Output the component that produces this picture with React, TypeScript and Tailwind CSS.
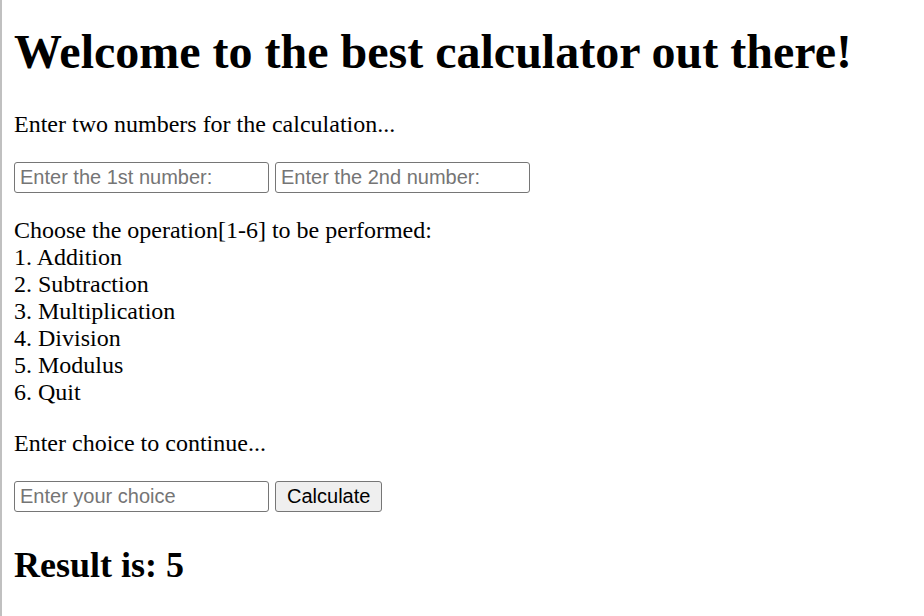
export default function App() {
  return (
    <div className="min-h-screen border-l-2 border-[#c0c0c0] bg-white font-['Liberation_Serif',serif] text-[24px] leading-[27px] text-black">
      <div className="px-[12px] py-[1px]">
        <h1 className="mt-[23px] mb-[32px] text-[48px] font-bold leading-[1.15]">Welcome to the best calculator out there!</h1>
        <p className="my-[24px]">Enter two numbers for the calculation...</p>
        <div className="flex gap-[6px]">
          <input
            type="text"
            placeholder="Enter the 1st number:"
            className="h-[31px] w-[255px] rounded-[3px] border border-[#767676] px-[5px] font-['Liberation_Sans',sans-serif] text-[20px] placeholder:text-[#757575]"
          />
          <input
            type="text"
            placeholder="Enter the 2nd number:"
            className="h-[31px] w-[255px] rounded-[3px] border border-[#767676] px-[5px] font-['Liberation_Sans',sans-serif] text-[20px] placeholder:text-[#757575]"
          />
        </div>
        <p className="my-[24px]">
          Choose the operation[1-6] to be performed:
          <br />1. Addition
          <br />2. Subtraction
          <br />3. Multiplication
          <br />4. Division
          <br />5. Modulus
          <br />6. Quit
        </p>
        <p className="my-[24px]">Enter choice to continue...</p>
        <div className="flex gap-[6px]">
          <input
            type="text"
            placeholder="Enter your choice"
            className="h-[31px] w-[255px] rounded-[3px] border border-[#767676] px-[5px] font-['Liberation_Sans',sans-serif] text-[20px] placeholder:text-[#757575]"
          />
          <button className="h-[31px] rounded-[3px] border border-[#767676] bg-[#efefef] px-[11px] font-['Liberation_Sans',sans-serif] text-[20px] text-black">
            Calculate
          </button>
        </div>
        <h2 className="mt-[33px] mb-[30px] text-[36px] font-bold leading-[1.15]">Result is: 5</h2>
      </div>
    </div>
  );
}
